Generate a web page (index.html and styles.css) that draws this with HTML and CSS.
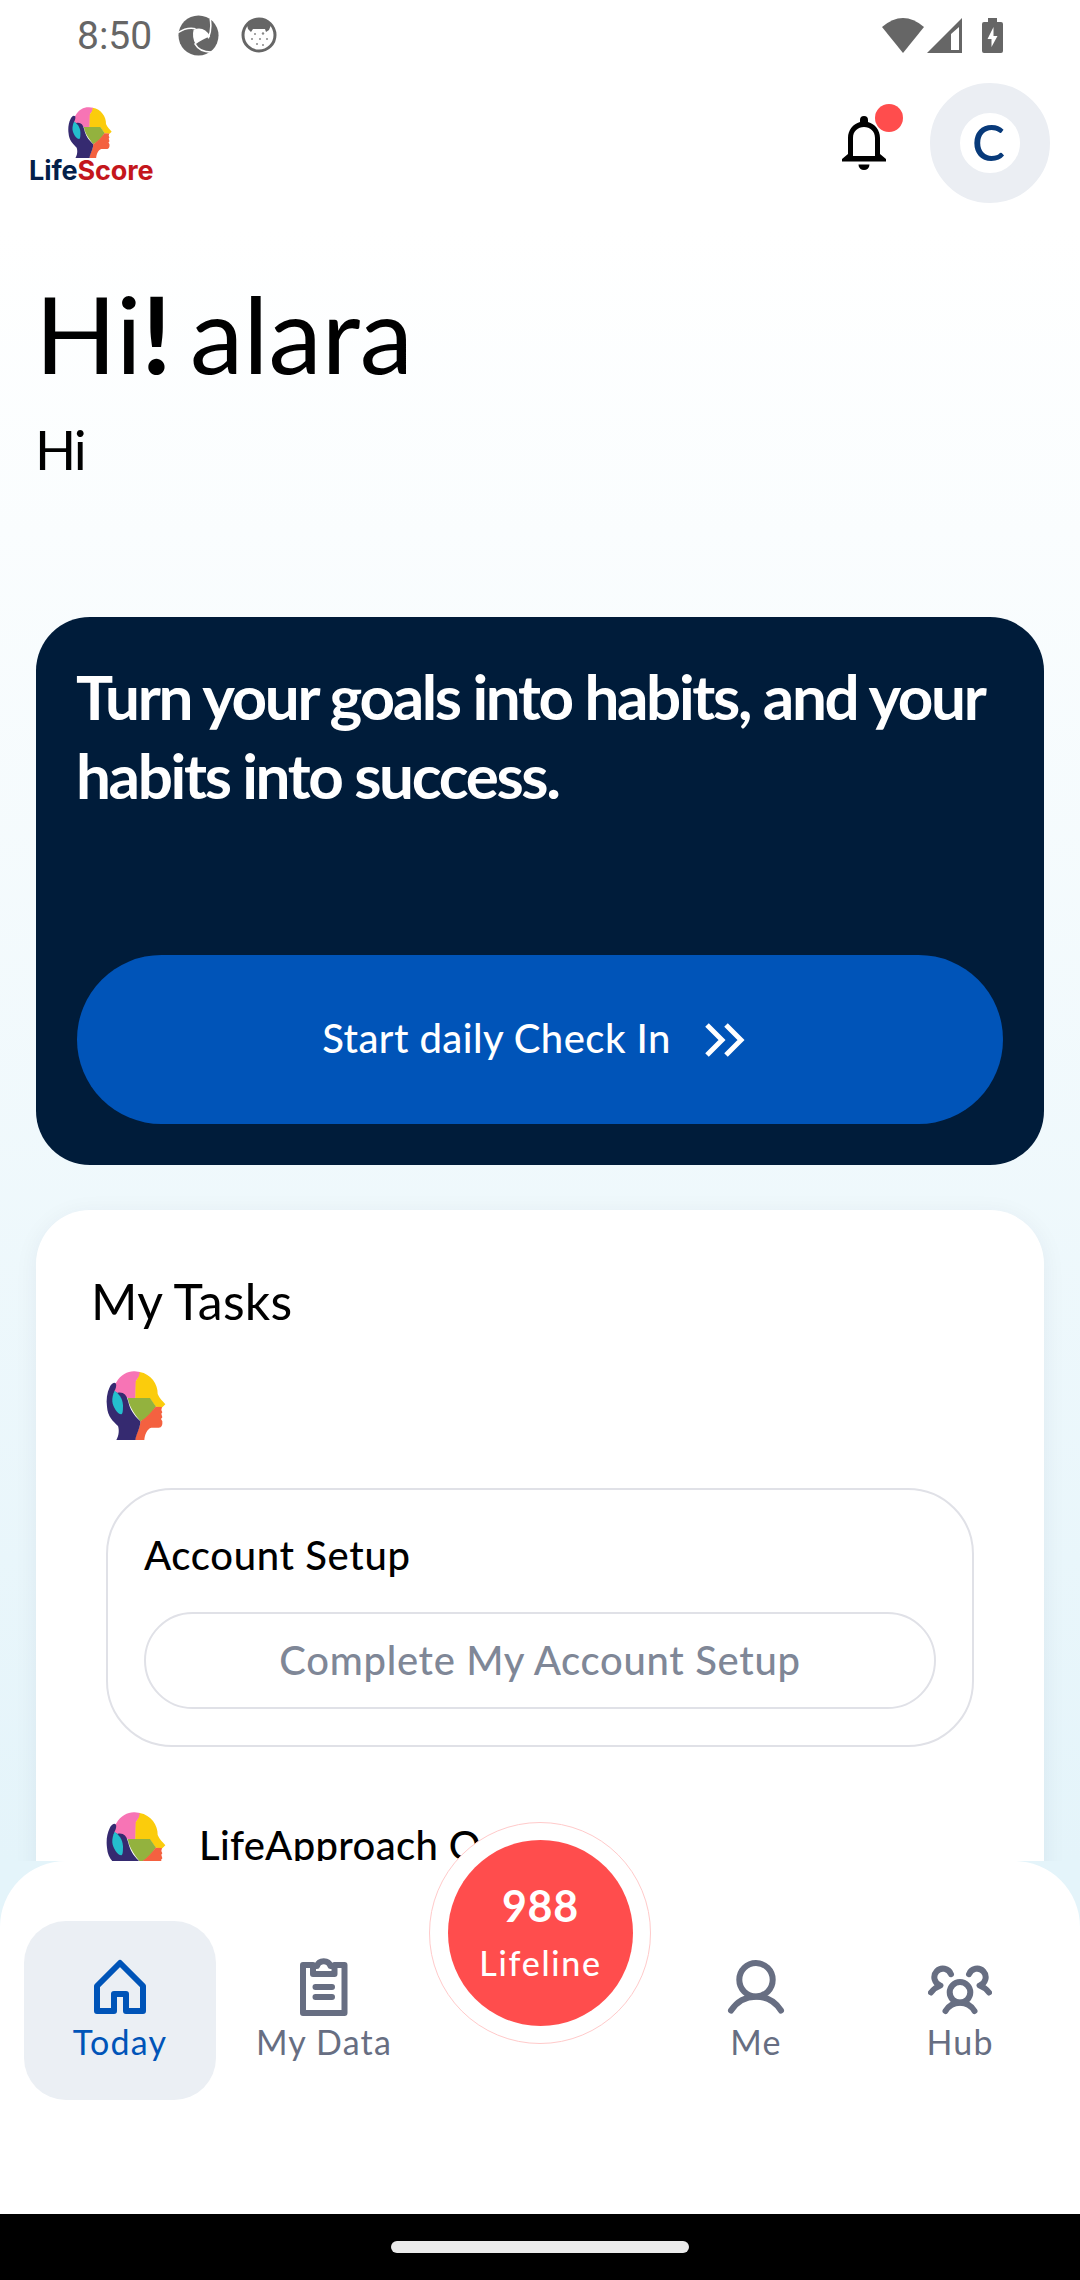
FILE: index.html
```html
<!DOCTYPE html>
<html lang="en">
<head>
<meta charset="utf-8">
<title>LifeScore</title>
<link rel="stylesheet" href="styles.css">
</head>
<body>
<svg class="defs" aria-hidden="true">
  <symbol id="head" viewBox="48 63 178 207">
    <path fill="#f774b5" d="M72 124C66 112 72 104 78 97C92 73 113 63 133 64L149 66V78L137 92L136 144H112L86 130Z"/>
    <path fill="#fbcc0c" d="M148 66C182 72 203 102 202 132C207 146 218 153 225 163L216 172L196 170L178 144H135L136 95C138 88 148 82 148 66Z"/>
    <path fill="#93b23e" d="M112 144H179L197 170C186 184 176 203 150 214L137 197C125 180 116 165 112 144Z"/>
    <path fill="#f46140" d="M196 170L215 171L213 180L216 187L213 191L216 202L212 207L216 214L216 222C214 232 210 233 203 233H183C170 236 163 255 162 270H134C136 250 150 235 150 214C170 202 182 187 196 170Z"/>
    <path fill="#352a70" d="M77 101C70 94 62 103 58 112C50 128 47 150 50 170C52 200 68 213 83 228C87 240 86 257 78 270H135C138 250 150 235 150 214C128 192 120 180 113 152C108 133 99 125 82 128L72 124C76 117 79 108 77 101Z"/>
    <path fill="#24bfcd" d="M73 122C85 132 96 142 98 165C98 185 97 190 93 193C80 192 68 170 66 155C65 145 68 130 73 122Z"/>
  </symbol>
</svg>
<div class="screen">
  <div class="status">
    <span class="clock">8:50</span>
    <svg class="aperture" viewBox="0 0 42 42"><circle cx="21" cy="21" r="20.5" fill="#666"/><path fill="#fff" d="M16 15Q27 11 33 22Q26 24 18 30Q14 22 16 15Z"/><path fill="none" stroke="#fff" stroke-width="1.6" d="M0 18Q9 12 18 14M33 4Q35 15 31 24M17 29Q22 38 34 38"/></svg>
    <svg class="cat" viewBox="0 0 36 36"><circle cx="18" cy="18" r="16" fill="#fff" stroke="#666" stroke-width="3"/><path fill="#666" d="M6 8Q18-3 30 8L28 13L25 15L24 12H12L10 15L7 12Z"/><g fill="#888"><circle cx="14" cy="17" r="1"/><circle cx="22" cy="16.500" r="1.200"/><circle cx="11" cy="22" r="1"/><circle cx="19" cy="22" r="1"/><circle cx="26" cy="22" r="1"/><circle cx="16" cy="27" r="1"/><circle cx="22" cy="28" r="1"/></g></svg>
    <svg class="wifi" viewBox="0 0 42 35"><path fill="#666" d="M0 9Q21-9 42 9L21 35Z"/></svg>
    <svg class="signal" viewBox="0 0 35 35"><path fill="#666" fill-rule="evenodd" d="M35 0V35H0ZM32 9L24 16V32H32Z"/></svg>
    <svg class="battery" viewBox="0 0 21 35"><path fill="#666" d="M6 0H15V4H19Q21 4 21 6V33Q21 35 19 35H2Q0 35 0 33V6Q0 4 2 4H6Z"/><path fill="#fff" d="M11.500 9V18H15.500L9.500 29V21H5.500Z"/></svg>
  </div>

  <header class="header">
    <div class="logo">
      <svg class="logo-head"><use href="#head"/></svg>
      <div class="logo-name">Life<span class="logo-score">Score</span></div>
    </div>
    <div class="bell">
      <svg class="bell-icon" viewBox="0 0 44 54"><path fill-rule="evenodd" d="M22 0a4 4 0 0 1 4 4V6C33 8 38 14 38 22V38L44 43V45.500H0V43L6 38V22C6 14 11 8 18 6V4a4 4 0 0 1 4-4ZM22 11C16 11 11 15 11 22V40H33V22C33 15 28 11 22 11Z"/><path d="M16.500 48.500H27.500A5.500 5.500 0 0 1 16.500 48.500Z"/></svg>
      <span class="bell-dot"></span>
    </div>
    <div class="avatar"><span class="avatar-letter">C</span></div>
  </header>

  <main class="content">
    <h1 class="greeting">Hi<span class="bang">!</span> alara</h1>
    <p class="subgreeting">Hi</p>

    <section class="checkin">
      <h2 class="checkin-title">Turn your goals into habits, and your<br>habits into success.</h2>
      <div class="checkin-button">Start daily Check In
        <svg class="chevrons" viewBox="0 0 40 34"><path fill="none" stroke="#fff" stroke-width="5" d="M2 2L17 17L2 32M21 2L36 17L21 32"/></svg>
      </div>
    </section>

    <section class="tasks">
      <h2 class="tasks-title">My Tasks</h2>
      <svg class="task-head"><use href="#head"/></svg>
      <div class="setup">
        <h3 class="setup-title">Account Setup</h3>
        <div class="setup-button">Complete My Account Setup</div>
      </div>
      <div class="approach">
        <svg class="task-head"><use href="#head"/></svg>
        <span class="approach-title">LifeApproach Q</span>
      </div>
    </section>
  </main>

  <nav class="nav">
    <div class="tab tab-active">
      <svg class="tab-icon" viewBox="0 0 64 64"><path d="M9 55V30L32 7L55 30V55H38V38H26V55Z"/></svg>
      <span>Today</span>
    </div>
    <div class="tab">
      <svg class="tab-icon" viewBox="0 0 64 64"><path d="M21 9H11V57H52.500V9H42.500M21 18V10H25C27 3.500 36.500 3.500 38.500 10H42.500V18ZM23.500 31H40M23.500 41H40"/></svg>
      <span>My Data</span>
    </div>
    <div class="lifeline">
      <div class="lifeline-disc"><strong class="lifeline-number">988</strong><span class="lifeline-label">Lifeline</span></div>
    </div>
    <div class="tab tab-me">
      <svg class="tab-icon" viewBox="0 0 64 64"><circle cx="32" cy="23.700" r="16.700"/><path d="M7 54.500C19 36 45 36 57 54.500"/></svg>
      <span>Me</span>
    </div>
    <div class="tab">
      <svg class="tab-icon" viewBox="0 0 64 64"><circle cx="32" cy="36.300" r="10.300"/><path d="M17.500 55C24 44 40 44 46.500 55M23 18.200A8.600 8.600 0 1 0 12.500 29.500C8 31 5 34 3 36.500M41 18.200A8.600 8.600 0 1 1 51.500 29.500C56 31 59 34 61 36.500"/></svg>
      <span>Hub</span>
    </div>
  </nav>
  <div class="gesture"><span class="gesture-pill"></span></div>
</div>
</body>
</html>
```
FILE: styles.css
```css
* { box-sizing: border-box; }
body { margin: 0; font-family: Lato, "Noto Sans", sans-serif; color: #000; }
h1, h2, h3, p { margin: 0; font-weight: 400; }
svg { display: block; flex: none; }
.defs { position: absolute; width: 0; height: 0; }

.screen {
  width: 1080px;
  height: 2280px;
  display: flex;
  flex-direction: column;
  overflow: hidden;
  background: linear-gradient(#fff 230px, #e4f4fa 1861px);
}

.status { display: flex; align-items: center; height: 70px; padding: 0 77px; flex: none; }
.clock { font: 400 39px/70px Roboto, sans-serif; color: #666; width: 101px; padding-top: 2px; }
.aperture { width: 41px; height: 41px; }
.cat { width: 36px; height: 36px; margin-left: 22px; }
.wifi { width: 42px; height: 35px; margin-left: auto; }
.signal { width: 35px; height: 35px; margin-left: 3px; }
.battery { width: 21px; height: 35px; margin-left: 20px; }

.header { display: flex; align-items: center; height: 120px; margin-top: 13px; padding: 0 30px; flex: none; }
.logo { width: 124px; padding-top: 5px; }
.logo-head { width: 44px; height: 51px; margin-left: 38px; }
.logo-name { font: 700 27px/26px Inter, sans-serif; letter-spacing: -.1px; margin-left: -1px; color: #04204a; white-space: nowrap; }
.logo-score { color: #c4161c; }
.bell { position: relative; margin-left: auto; margin-right: 44px; }
.bell-icon { width: 44px; height: 54px; }
.bell-dot { position: absolute; left: 33px; top: -12px; width: 28px; height: 28px; border-radius: 50%; background: #ff4d4d; }
.avatar { width: 120px; height: 120px; border-radius: 50%; background: #fff; border: 30px solid #ebeef3; display: flex; justify-content: center; }
.avatar-letter { font-size: 49px; line-height: 59px; font-weight: 600; color: #083a7a; margin-right: 3px; }

.content { height: 1658px; overflow: hidden; padding: 66px 36px 0; flex: none; }
.greeting { font-size: 107px; line-height: 128px; word-spacing: -9px; margin-left: -1px; }
.bang { font-weight: 700; }
.subgreeting { font-size: 54px; line-height: 66px; margin: 20px 0 0 -1px; letter-spacing: -2px; }

.checkin { margin-top: 134px; height: 548px; padding: 40px 41px 0; border-radius: 54px; background: #001c3a; color: #fff; }
.checkin-title { font-size: 62px; line-height: 79px; font-weight: 700; letter-spacing: -2.36px; margin-left: -1px; white-space: nowrap; }
.checkin-button { margin-top: 140px; height: 169px; padding: 0 13px 3px 0; border-radius: 85px; background: #0054b8; display: flex; align-items: center; justify-content: center; font-size: 40px; font-weight: 500; letter-spacing: .45px; }
.chevrons { width: 40px; height: 34px; margin: 3px 0 0 34px; }

.tasks { margin-top: 45px; height: 800px; padding: 61px 70px 0; border-radius: 54px; background: #fff; box-shadow: 0 4px 24px rgba(0, 30, 60, .06); }
.tasks-title { font-size: 50px; line-height: 60px; margin-left: -15px; letter-spacing: .3px; }
.task-head { width: 60px; height: 69px; }
.tasks > .task-head { margin-top: 40px; }
.setup { margin-top: 48px; height: 259px; padding: 41px 36px 0; border: 2px solid #e0e1e7; border-radius: 66px; }
.setup-title { font-size: 40px; line-height: 48px; font-weight: 500; letter-spacing: .65px; }
.setup-button { margin-top: 33px; height: 97px; padding-bottom: 2px; border: 2px solid #e0e1e7; border-radius: 49px; color: #7f8797; font-size: 40px; font-weight: 500; letter-spacing: .68px; display: flex; align-items: center; justify-content: center; }
.approach { display: flex; margin-top: 65px; }
.approach-title { font-size: 40px; line-height: 48px; font-weight: 500; letter-spacing: .35px; padding-top: 9px; margin-left: 33px; }

.nav { position: relative; height: 353px; padding: 60px 24px 0; border-radius: 66px 66px 0 0; background: #fff; display: flex; gap: 12px; flex: none; }
.tab { width: 192px; height: 179px; padding-top: 35px; border-radius: 42px; display: flex; flex-direction: column; align-items: center; color: #676e82; font-size: 34px; line-height: 41px; letter-spacing: 1.2px; }
.tab-me { margin-left: auto; }
.tab-active { background: #ebeff4; color: #0054b8; }
.tab-icon { width: 64px; height: 64px; margin-bottom: 1px; fill: none; stroke: currentColor; stroke-width: 6; stroke-linecap: round; stroke-linejoin: round; }
.lifeline { position: absolute; left: 429px; top: -39px; width: 222px; height: 222px; padding: 17px 18px; border: 1px solid #ffcaca; border-radius: 50%; background: #fff; }
.lifeline-disc { width: 185px; height: 186px; border-radius: 50%; background: #ff4d4d; color: #fff; display: flex; flex-direction: column; align-items: center; padding-top: 40px; }
.lifeline-number { font-size: 43px; line-height: 52px; letter-spacing: .8px; }
.lifeline-label { font-size: 34px; line-height: 41px; margin-top: 10px; font-weight: 500; letter-spacing: 1.7px; }

.gesture { height: 66px; background: #000; display: flex; align-items: center; justify-content: center; flex: none; }
.gesture-pill { width: 298px; height: 12px; border-radius: 6px; background: #ebebeb; }
```
